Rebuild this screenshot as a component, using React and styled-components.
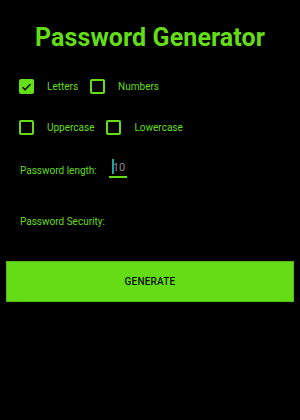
import React, { useState } from 'react';
import styled, { createGlobalStyle } from 'styled-components';

const GREEN = '#64dd17';

const Global = createGlobalStyle`
  html, body {
    margin: 0;
    padding: 0;
    background: #000;
  }
  body {
    font-family: Roboto, "Noto Sans", sans-serif;
  }
`;

const Screen = styled.div`
  width: 300px;
  height: 420px;
  background: #000;
  display: flex;
  flex-direction: column;
  box-sizing: border-box;
  padding-top: 23px;
`;

const Title = styled.h1`
  margin: 0;
  text-align: center;
  color: ${GREEN};
  font-size: 25px;
  font-weight: 700;
  line-height: 30px;
  letter-spacing: 0.1px;
`;

const Options = styled.div`
  display: flex;
  flex-direction: column;
  gap: 26px;
  padding: 26px 0 0 19px;
`;

const Row = styled.div`
  display: flex;
  align-items: center;
`;

const Option = styled.label`
  display: flex;
  align-items: center;
  margin-right: 12px;
  cursor: pointer;
`;

const Box = styled.span`
  width: 15px;
  height: 15px;
  box-sizing: border-box;
  border: 2px solid ${GREEN};
  border-radius: 2px;
  background: ${p => (p.$checked ? GREEN : 'transparent')};
  display: flex;
  align-items: center;
  justify-content: center;
  margin-right: 13px;
`;

const Label = styled.span`
  color: ${GREEN};
  font-size: 10px;
  line-height: 14px;
`;

const Field = styled.div`
  display: flex;
  align-items: flex-end;
  padding-left: 20px;
  margin-top: ${p => p.$top}px;
`;

const LengthInput = styled.div`
  margin-left: 12px;
  width: 14px;
  border-bottom: 2px solid ${GREEN};
  color: #8a8a8a;
  font-size: 11px;
  line-height: 14px;
  position: relative;
  padding-left: 4px;
  padding-bottom: 1px;
  &:before {
    content: '';
    position: absolute;
    left: 3px;
    top: -2px;
    width: 2px;
    height: 15px;
    background: #26a69a;
  }
`;

const Button = styled.button`
  margin: 32px 6px 0 6px;
  height: 41px;
  background: ${GREEN};
  border: 1px solid #4fb812;
  color: #111;
  font-family: Roboto, sans-serif;
  font-size: 10px;
  font-weight: 500;
  letter-spacing: 0.2px;
  cursor: pointer;
`;

const Check = () => (
  <svg width="12" height="12" viewBox="0 0 24 24">
    <path d="M3.5 12.5l5.5 5.5L20.5 6" fill="none" stroke="#000" strokeWidth="3.2" />
  </svg>
);

const CheckItem = ({ label, checked, onToggle }) => (
  <Option onClick={onToggle}>
    <Box $checked={checked}>{checked && <Check />}</Box>
    <Label>{label}</Label>
  </Option>
);

export default function App() {
  const [opts, setOpts] = useState({ letters: true, numbers: false, uppercase: false, lowercase: false });
  const toggle = k => setOpts(o => ({ ...o, [k]: !o[k] }));

  return (
    <Screen>
      <Global />
      <Title>Password Generator</Title>
      <Options>
        <Row>
          <CheckItem label="Letters" checked={opts.letters} onToggle={() => toggle('letters')} />
          <CheckItem label="Numbers" checked={opts.numbers} onToggle={() => toggle('numbers')} />
        </Row>
        <Row>
          <CheckItem label="Uppercase" checked={opts.uppercase} onToggle={() => toggle('uppercase')} />
          <CheckItem label="Lowercase" checked={opts.lowercase} onToggle={() => toggle('lowercase')} />
        </Row>
      </Options>
      <Field $top={26}>
        <Label>Password length:</Label>
        <LengthInput>10</LengthInput>
      </Field>
      <Field $top={37}>
        <Label>Password Security:</Label>
      </Field>
      <Button>GENERATE</Button>
    </Screen>
  );
}
